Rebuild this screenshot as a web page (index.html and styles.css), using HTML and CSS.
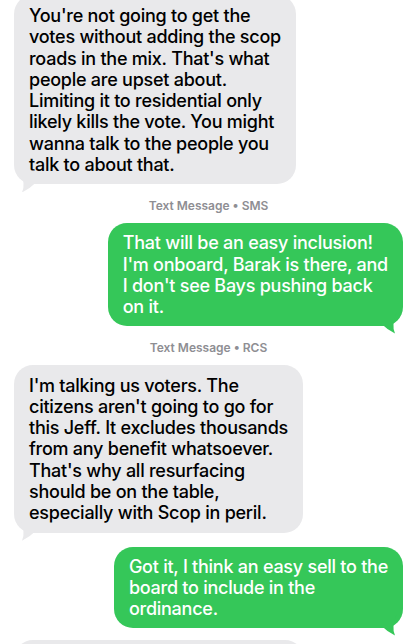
FILE: index.html
```html
<!DOCTYPE html>
<html lang="en">
<head>
  <meta charset="UTF-8" />
  <meta name="viewport" content="width=device-width, initial-scale=1.0"/>
  <title>Messages</title>
  <link rel="stylesheet" href="styles.css">
</head>
<body>
  <div class="thread">
    <div class="bubble in first">
      You're not going to get the<br>
      votes without adding the scop<br>
      roads in the mix. That's what<br>
      people are upset about.<br>
      Limiting it to residential only<br>
      likely kills the vote. You might<br>
      wanna talk to the people you<br>
      talk to about that.
    </div>

    <div class="stamp">Text Message &bull; SMS</div>

    <div class="bubble out">
      That will be an easy inclusion!<br>
      I'm onboard, Barak is there, and<br>
      I don't see Bays pushing back<br>
      on it.
    </div>

    <div class="stamp">Text Message &bull; RCS</div>

    <div class="bubble in">
      I'm talking us voters. The<br>
      citizens aren't going to go for<br>
      this Jeff. It excludes thousands<br>
      from any benefit whatsoever.<br>
      That's why all resurfacing<br>
      should be on the table,<br>
      especially with Scop in peril.
    </div>

    <div class="bubble out">
      Got it, I think an easy sell to the<br>
      board to include in the<br>
      ordinance.
    </div>

    <div class="bubble in next"></div>
  </div>
</body>
</html>
```

FILE: styles.css
```css
* {
  box-sizing: border-box;
}

body {
  margin: 0;
  background: #fff;
  font-family: Inter, "Noto Sans", sans-serif;
}

.thread {
  display: flex;
  flex-direction: column;
  height: 644px;
  overflow: hidden;
  padding: 0 15px 0 14px;
}

.bubble {
  position: relative;
  flex-shrink: 0;
  width: fit-content;
  padding: 10px 15px 9px;
  border-radius: 19px;
  font-size: 18px;
  font-weight: 450;
  letter-spacing: -0.25px;
  line-height: 21.3px;
  white-space: nowrap;
}

.bubble.in {
  align-self: flex-start;
  background: #e9e9eb;
  color: #000;
}

.bubble.out {
  align-self: flex-end;
  padding: 9px 15px 8px;
  background: #35c759;
  color: #fff;
  margin-top: 14px;
}

.bubble.in::after,
.bubble.out::after {
  content: "";
  position: absolute;
  bottom: -8px;
  width: 22px;
  height: 22px;
}

.bubble.in::after {
  left: 2px;
  background: #e9e9eb;
  clip-path: path("M4 0 L20 0 L20 12 Q14 18 6 22 Q10 14 4 0 Z");
}

.bubble.out::after {
  right: 2px;
  background: #35c759;
  clip-path: path("M18 0 L2 0 L2 12 Q8 18 16 22 Q12 14 18 0 Z");
}

.bubble.first {
  margin-top: -5px;
}

.stamp {
  margin-top: 14px;
  text-align: center;
  font-size: 12px;
  font-weight: 600;
  line-height: 15px;
  color: #8e8e93;
}

.stamp + .bubble {
  margin-top: 10px;
}

.bubble.next {
  width: 290px;
  height: 40px;
  margin-top: 12px;
}

.bubble.next::after {
  display: none;
}
```
